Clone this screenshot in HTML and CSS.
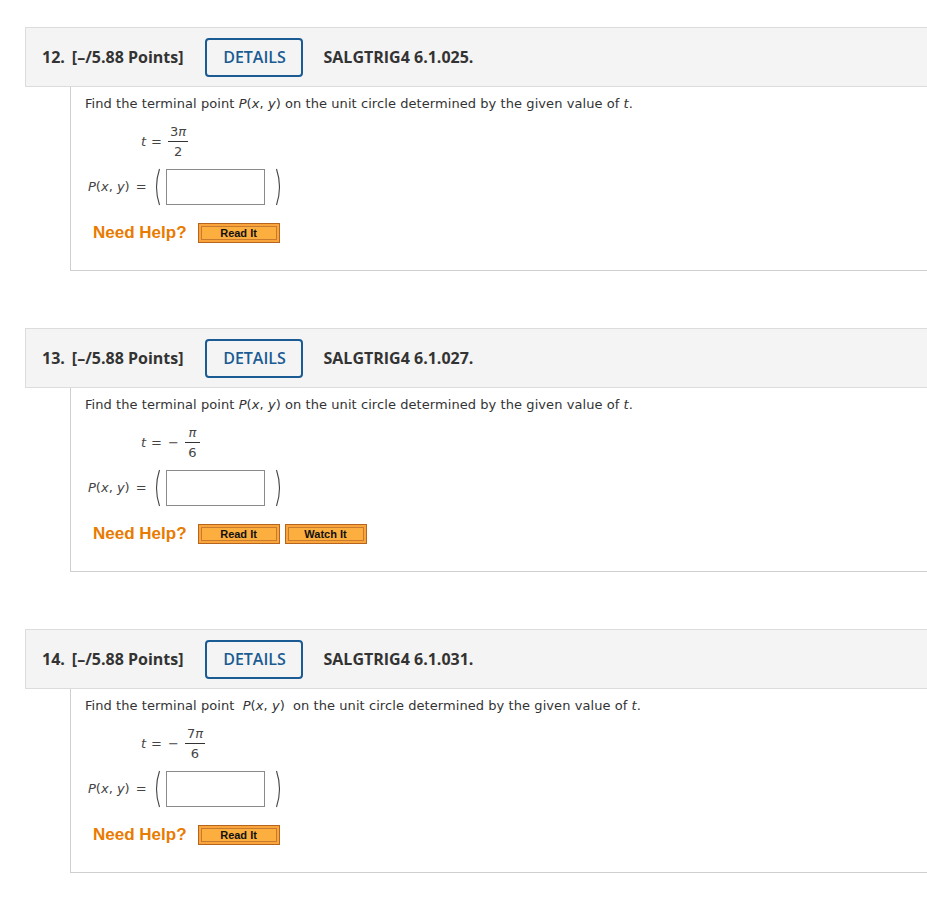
FILE: index.html
```html
<!DOCTYPE html>
<html>
<head>
<meta charset="utf-8">
<link rel="stylesheet" href="styles.css">
</head>
<body>
<div class="page">

  <div class="question">
    <div class="qhead">
      <span class="qnum">12.</span>
      <span class="qpts">[–/5.88 Points]</span>
      <span class="details">DETAILS</span>
      <span class="qcode">SALGTRIG4 6.1.025.</span>
    </div>
    <div class="qbody">
      <p class="prompt">Find the terminal point <i>P</i>(<i>x</i>, <i>y</i>) on the unit circle determined by the given value of <i>t</i>.</p>
      <div class="trow">
        <i class="tv">t</i><span class="eq">=</span>
        <span class="frac"><span class="num">3<i>π</i></span><span class="den">2</span></span>
      </div>
      <div class="prow">
        <span class="plabel"><i>P</i>(<i>x</i>, <i>y</i>)</span><span class="peq">=</span>
        <svg class="paren" width="8" height="38" viewBox="0 0 8 38"><path d="M6.5 1 Q0.5 19 6.5 37" fill="none" stroke="#444" stroke-width="1.1"/></svg>
        <span class="answer"></span>
        <svg class="paren" width="8" height="38" viewBox="0 0 8 38"><path d="M1.5 1 Q7.5 19 1.5 37" fill="none" stroke="#444" stroke-width="1.1"/></svg>
      </div>
      <div class="help">
        <span class="needhelp">Need Help?</span>
        <span class="hbtn"><span class="hin">Read It</span></span>
      </div>
    </div>
  </div>

  <div class="question">
    <div class="qhead">
      <span class="qnum">13.</span>
      <span class="qpts">[–/5.88 Points]</span>
      <span class="details">DETAILS</span>
      <span class="qcode">SALGTRIG4 6.1.027.</span>
    </div>
    <div class="qbody">
      <p class="prompt">Find the terminal point <i>P</i>(<i>x</i>, <i>y</i>) on the unit circle determined by the given value of <i>t</i>.</p>
      <div class="trow">
        <i class="tv">t</i><span class="eq">=</span><span class="minus">−</span>
        <span class="frac"><span class="num"><i>π</i></span><span class="den">6</span></span>
      </div>
      <div class="prow">
        <span class="plabel"><i>P</i>(<i>x</i>, <i>y</i>)</span><span class="peq">=</span>
        <svg class="paren" width="8" height="38" viewBox="0 0 8 38"><path d="M6.5 1 Q0.5 19 6.5 37" fill="none" stroke="#444" stroke-width="1.1"/></svg>
        <span class="answer"></span>
        <svg class="paren" width="8" height="38" viewBox="0 0 8 38"><path d="M1.5 1 Q7.5 19 1.5 37" fill="none" stroke="#444" stroke-width="1.1"/></svg>
      </div>
      <div class="help">
        <span class="needhelp">Need Help?</span>
        <span class="hbtn"><span class="hin">Read It</span></span>
        <span class="hbtn"><span class="hin">Watch It</span></span>
      </div>
    </div>
  </div>

  <div class="question">
    <div class="qhead">
      <span class="qnum">14.</span>
      <span class="qpts">[–/5.88 Points]</span>
      <span class="details">DETAILS</span>
      <span class="qcode">SALGTRIG4 6.1.031.</span>
    </div>
    <div class="qbody">
      <p class="prompt">Find the terminal point <span class="inmath"><i>P</i>(<i>x</i>, <i>y</i>)</span> on the unit circle determined by the given value of <i>t</i>.</p>
      <div class="trow">
        <i class="tv">t</i><span class="eq">=</span><span class="minus">−</span>
        <span class="frac"><span class="num">7<i>π</i></span><span class="den">6</span></span>
      </div>
      <div class="prow">
        <span class="plabel"><i>P</i>(<i>x</i>, <i>y</i>)</span><span class="peq">=</span>
        <svg class="paren" width="8" height="38" viewBox="0 0 8 38"><path d="M6.5 1 Q0.5 19 6.5 37" fill="none" stroke="#444" stroke-width="1.1"/></svg>
        <span class="answer"></span>
        <svg class="paren" width="8" height="38" viewBox="0 0 8 38"><path d="M1.5 1 Q7.5 19 1.5 37" fill="none" stroke="#444" stroke-width="1.1"/></svg>
      </div>
      <div class="help">
        <span class="needhelp">Need Help?</span>
        <span class="hbtn"><span class="hin">Read It</span></span>
      </div>
    </div>
  </div>

</div>
</body>
</html>
```

FILE: styles.css
```css
html, body {
  margin: 0;
  padding: 0;
  background: #fff;
  overflow: hidden;
}

.page {
  padding-top: 27px;
  padding-left: 25px;
}

.question {
  margin-bottom: 57px;
}

.qhead {
  box-sizing: border-box;
  height: 60px;
  border: 1px solid #dcdcdc;
  border-right: none;
  background: #f4f4f4;
  display: flex;
  align-items: center;
  padding-left: 16px;
  font-family: "Open Sans", "DejaVu Sans", sans-serif;
  font-weight: 700;
  font-size: 16px;
  color: #333;
}

.qnum {
  margin-right: 7px;
}

.details {
  box-sizing: border-box;
  width: 98px;
  height: 39px;
  margin-left: 22px;
  margin-right: 20px;
  border: 2px solid #1a5b93;
  border-radius: 4px;
  color: #1a5b93;
  font-weight: 600;
  display: flex;
  align-items: center;
  justify-content: center;
}

.qbody {
  box-sizing: border-box;
  margin-left: 45px;
  height: 184px;
  border-left: 1px solid #cfcfcf;
  border-bottom: 1px solid #cfcfcf;
  padding: 9px 0 0 14px;
  font-family: "DejaVu Sans", Verdana, sans-serif;
  font-size: 13px;
  color: #333;
}

.prompt {
  margin: 0;
  line-height: 16px;
  letter-spacing: 0.07px;
}

.inmath {
  margin: 0 4px;
}

.trow {
  display: flex;
  align-items: center;
  height: 34px;
  margin-top: 12px;
  margin-left: 56px;
  font-size: 13px;
  color: #444;
}

.tv {
  margin-right: 5px;
}

.eq {
  margin-right: 6px;
}

.minus {
  margin-left: 0;
  margin-right: 6px;
}

.frac {
  display: inline-flex;
  flex-direction: column;
  align-items: center;
  min-width: 15px;
}

.num {
  display: block;
  width: 100%;
  text-align: center;
  border-bottom: 1px solid #333;
  padding-bottom: 2px;
  line-height: 15px;
  padding-left: 2px;
  padding-right: 2px;
  box-sizing: border-box;
}

.den {
  display: block;
  line-height: 15px;
  padding-top: 2px;
}

.prow {
  display: flex;
  align-items: center;
  height: 39px;
  margin-top: 9px;
  margin-left: 3px;
  font-size: 13px;
  color: #444;
}

.plabel {
  margin-right: 6px;
}

.peq {
  margin-right: 6px;
}

.paren {
  display: block;
}

.answer {
  box-sizing: border-box;
  width: 99px;
  height: 36px;
  border: 1px solid #8a8a8a;
  background: #fff;
  margin-left: 5px;
  margin-right: 10px;
}

.help {
  display: flex;
  align-items: center;
  height: 22px;
  margin-top: 16px;
  margin-left: 8px;
}

.needhelp {
  font-family: "Liberation Sans", Arial, sans-serif;
  font-weight: 700;
  font-size: 17px;
  color: #e97b00;
  margin-right: 11px;
}

.hbtn {
  box-sizing: border-box;
  width: 82px;
  height: 20px;
  border: 1px solid #b5651d;
  background: #f9a53c;
  padding: 2px;
  margin-right: 5px;
  display: flex;
}

.hin {
  flex: 1;
  box-sizing: border-box;
  border: 1px solid #c87a2e;
  background: #fcae3e;
  display: flex;
  align-items: center;
  justify-content: center;
  font-family: "Liberation Sans", Arial, sans-serif;
  font-weight: 700;
  font-size: 11px;
  color: #111;
}
```
